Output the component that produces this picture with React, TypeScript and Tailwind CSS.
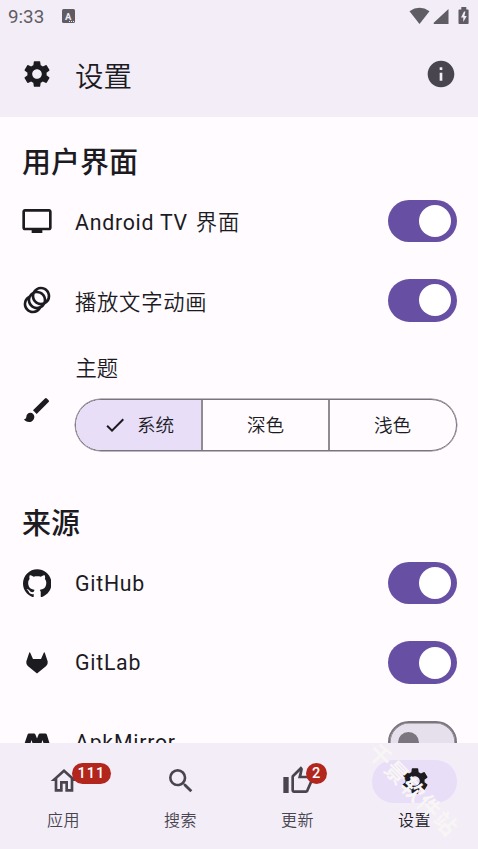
import { ReactNode } from "react";
import {
  MdAnimation,
  MdBrush,
  MdCheck,
  MdInfo,
  MdOutlineHome,
  MdOutlineThumbUp,
  MdSearch,
  MdSettings,
  MdTv,
} from "react-icons/md";
import { SiGithub } from "react-icons/si";

type RowProps = {
  icon: ReactNode;
  label: ReactNode;
  checked: boolean;
};

type NavProps = {
  icon: ReactNode;
  label: string;
  active?: boolean;
  badge?: string;
};

const GitlabIcon = () => (
  <svg viewBox="0 0 32 32" className="size-8" fill="currentColor">
    <path d="M9.100 5.600 L12 12.100 H20 L22.900 5.600 Q23.400 5 23.800 5.800 L26.700 14.600 Q27.100 17.200 25.200 18.900 L16 26.500 L6.800 18.900 Q4.900 17.200 5.300 14.600 L8.200 5.800 Q8.600 5 9.100 5.600Z" />
  </svg>
);

const ApkMirrorIcon = () => (
  <svg viewBox="0 0 32 32" className="size-8" fill="currentColor">
    <path d="M8 7.500h5q1 0 1.400 1l1.600 4.100 1.600-4.100q.4-1 1.400-1h5.400q1 0 1.400 1L30 22h-6l-2.500-8-2.500 8h-6l-2.500-8-2.500 8H2L6.600 8.500q.4-1 1.400-1Z" />
  </svg>
);

const StatusBar = () => (
  <div className="h-8 pl-2 pr-[9px] flex items-center justify-between text-[#5f5c64]">
    <div className="flex items-center gap-[18px]">
      <span className="text-[18.800px] leading-8 pt-px">9:33</span>
      <svg viewBox="0 0 13 14" className="w-[13px] h-[14px]">
        <rect width="13" height="14" rx="1.500" fill="#5f5c64" />
        <text x="6.300" y="10.500" textAnchor="middle" fontSize="9.500" fontWeight="700" fill="#f2edf7">
          A
        </text>
        <path d="M7 12.500h1M9 12.500h1M11 12.500h1" stroke="#f2edf7" strokeWidth="1" />
      </svg>
    </div>
    <svg viewBox="0 0 62 20" className="w-[62px] h-5" fill="currentColor">
      <path d="M2.500 5.200Q12.500 -1.600 22.500 5.200L12.500 18Z" />
      <path d="M41.500 3v15H27Q26 17.200 27 16.500Z" />
      <path d="M52.300 3.500h2V1h5v2.500h1.500q.8 0 .8.800V17.200q0 .8-.8.800h-8.500q-.8 0-.8-.8V4.300q0-.8.8-.8Z" />
      <path d="M57 5.500l-3 6h2.300v4.500l3.400-6h-2.300l1-4.500Z" fill="#f2edf7" />
    </svg>
  </div>
);

const Switch = ({ checked }: { checked: boolean }) => (
  <div
    className={`w-[69px] h-[42.500px] rounded-full flex items-center ${
      checked
        ? "bg-[#6750a4] justify-end pr-[5.500px]"
        : "bg-[#e6e0ec] border-2 border-[#7a757f] shadow-[inset_0_0_0_0.600px_#7a757f] pl-[8px]"
    }`}
  >
    <div
      className={`rounded-full ${
        checked ? "size-8 bg-white" : "size-[21px] bg-[#7a757f]"
      }`}
    />
  </div>
);

const SettingRow = ({ icon, label, checked }: RowProps) => (
  <div className="h-[79.600px] pl-[21px] pr-[21.500px] flex items-center">
    <div className="size-8 flex items-center justify-center">{icon}</div>
    <p className="flex-1 ml-[22px] pt-px text-[21.300px] tracking-[0.750px]">{label}</p>
    <Switch checked={checked} />
  </div>
);

const NavItem = ({ icon, label, active, badge }: NavProps) => (
  <div
    className={`w-[117px] flex flex-col items-center ${
      active ? "text-[#1c1b1f]" : "text-[#49454f]"
    }`}
  >
    <div
      className={`relative w-[85px] h-[43px] pb-[2px] rounded-full flex items-center justify-center ${
        active ? "bg-[#e8def8]" : ""
      }`}
    >
      {icon}
      {badge && (
        <span className="absolute left-[51px] top-[3px] h-[21px] min-w-[21px] px-[5.500px] rounded-full bg-[#b3261e] text-white text-[14.600px] leading-[21px] tracking-[0.900px] font-medium text-center">
          {badge}
        </span>
      )}
    </div>
    <p className="mt-[7px] text-[16px] leading-[22px] tracking-[0.500px] font-[350]">{label}</p>
  </div>
);

const App = () => {
  return (
    <div className="relative w-[478px] h-[849px] overflow-hidden flex flex-col bg-[#fffbff] text-[#1c1b1f] font-['Roboto','Noto_Sans_CJK_SC',sans-serif]">
      <header className="h-[117px] shrink-0 bg-[#f2edf7]">
        <StatusBar />
        <div className="h-[84px] pl-[21px] pr-[21.500px] flex items-center">
          <MdSettings className="size-8" />
          <h1 className="flex-1 ml-[22px] pt-[8px] text-[28.500px] font-[350]">设置</h1>
          <MdInfo className="size-8 text-[#49454f]" />
        </div>
      </header>

      <main className="flex-1 min-h-0 overflow-hidden">
        <h2 className="h-[64px] pt-[25px] pl-[22px] text-[29px] leading-[42px] font-medium">
          用户界面
        </h2>
        <SettingRow
          icon={<MdTv className="size-8" />}
          label={
            <span className="relative top-[2px]">
              Android TV <span className="ml-[2px] font-[350]">界面</span>
            </span>
          }
          checked
        />
        <SettingRow
          icon={<MdAnimation className="size-8" />}
          label={<span className="relative top-[2px] font-[350]">播放文字动画</span>}
          checked
        />

        <div className="h-[140px] pl-[21px] pr-[21.500px] flex">
          <MdBrush className="size-8 mt-[54px]" />
          <div className="flex-1 ml-[21.500px]">
            <p className="mt-[14px] ml-px text-[21.300px] leading-[30px] font-[350]">主题</p>
            <div className="mt-[15px] h-[52px] rounded-full border border-[#79747e] shadow-[0_0_0_0.400px_#79747e] overflow-hidden grid grid-cols-[127px_127px_1fr] text-[18.600px] font-[350]">
              <div className="pt-[4px] pl-px flex items-center justify-center gap-[10px] bg-[#e8def8] border-r-2 border-[#8f8a94]">
                <MdCheck className="size-[24px] mb-[4px]" />
                系统
              </div>
              <div className="pt-[4px] pl-px flex items-center justify-center border-r-2 border-[#8f8a94]">
                深色
              </div>
              <div className="pt-[4px] flex items-center justify-center">浅色</div>
            </div>
          </div>
        </div>

        <h2 className="h-[63px] pt-[23px] pl-[22px] text-[29px] leading-[42px] font-medium">
          来源
        </h2>
        <SettingRow icon={<SiGithub className="size-[28.500px]" />} label="GitHub" checked />
        <SettingRow icon={<GitlabIcon />} label="GitLab" checked />
        <SettingRow icon={<ApkMirrorIcon />} label="ApkMirror" checked={false} />
      </main>

      <nav className="h-[106px] shrink-0 pt-[17px] px-[5px] flex bg-[#f2edf7]">
        <NavItem icon={<MdOutlineHome className="size-8" />} label="应用" badge="111" />
        <NavItem icon={<MdSearch className="size-8" />} label="搜索" />
        <NavItem icon={<MdOutlineThumbUp className="size-8" />} label="更新" badge="2" />
        <NavItem icon={<MdSettings className="size-8" />} label="设置" active />
      </nav>

      <span className="absolute left-[352px] top-[775px] w-[122px] h-[30px] rotate-[46deg] text-center whitespace-nowrap text-[22.500px] leading-[30px] tracking-[1px] font-bold text-[#f8f5f5]">
        千景软件站
      </span>
    </div>
  );
};

export default App;
